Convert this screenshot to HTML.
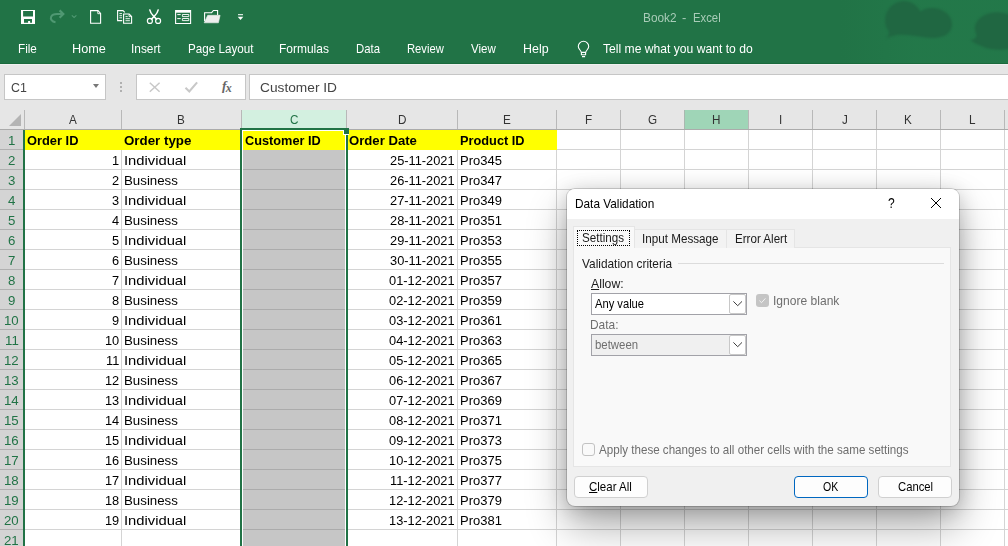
<!DOCTYPE html><html><head><meta charset="utf-8"><title>Book2 - Excel</title><style>*{box-sizing:border-box;margin:0;padding:0}
html,body{width:1008px;height:546px;overflow:hidden;background:#fff;font-family:"Liberation Sans",sans-serif;}
body{position:relative}
#ribbon{position:absolute;left:0;top:0;width:1008px;height:64px;background:#217346;overflow:hidden;border-bottom:1px solid #1a6a3c}
#ribbon .glow{position:absolute;left:840px;top:0;width:168px;height:64px;background:linear-gradient(90deg,rgba(36,124,76,0) 0,rgba(36,124,76,.55) 45%,rgba(36,124,76,.55) 100%)}
.qi{position:absolute}
#fbar{position:absolute;left:0;top:64px;width:1008px;height:46px;background:#e6e6e6;border-top:1px solid #f0f0f0}
#namebox{position:absolute;left:4px;top:9px;width:102px;height:26px;background:#fff;border:1px solid #c6c6c6}
#namebox i{position:absolute;left:87.500px;top:9px;width:0;height:0;border-left:3.500px solid transparent;border-right:3.500px solid transparent;border-top:4px solid #777}
#dots{position:absolute;left:120px;top:17px;width:2px;height:10px;background:repeating-linear-gradient(#b0b0b0 0 2px,transparent 2px 4px)}
#fbtns{position:absolute;left:136px;top:9px;width:110px;height:26px;background:#fff;border:1px solid #c6c6c6}
#finput{position:absolute;left:249px;top:9px;width:770px;height:26px;background:#fff;border:1px solid #c6c6c6}
#grid{position:absolute;left:0;top:110px;width:1008px;height:436px;background:repeating-linear-gradient(#fff 0 19px,#d4d4d4 19px 20px)}
#colhdr{position:absolute;left:0;top:0;width:1008px;height:20px;background:#e6e6e6;border-bottom:1px solid #ababab}
.corner{position:absolute;left:9px;top:4px;width:0;height:0;border-left:12px solid transparent;border-bottom:12px solid #b4b4b4}
.ch{position:absolute;top:0;height:19px;border-left:1px solid #b8b8b8}
.ch.sel{background:#d3f0e0;color:#217346}
.ch.hov{background:#9fd5b7;border-left-color:#a9b8b0}
.rh{position:absolute;left:0;width:23px;height:20px;background:#d4d4d4;border-bottom:1px solid #b0b0b0}
.yellow{position:absolute;left:25px;top:20px;width:532px;height:20px;background:#ffff00}
.grey{position:absolute;left:243px;top:40px;width:102px;height:396px;background:repeating-linear-gradient(#c6c6c6 0 19px,#ababab 19px 20px)}
#vlines i{position:absolute;top:20px;width:1px;height:416px;background:#d4d4d4}
#selbox{position:absolute;left:240px;top:18px;width:108px;height:430px;border:2px solid #217346;border-bottom:none}
#selbox b{position:absolute;left:0;top:0;right:0;bottom:0;border:1px solid #fff;border-bottom:none}
#selhandle{position:absolute;left:344px;top:18px;width:5px;height:6px;background:#217346}
#selhandle:before{content:"";position:absolute;left:-1px;top:2px;width:1px;height:5px;background:#fff}
#selhandle:after{content:"";position:absolute;left:-1px;top:6px;width:6px;height:1px;background:#fff}
#aline{position:absolute;left:23px;top:20px;width:2px;height:416px;background:#217346}
#dlg{position:absolute;left:567px;top:189px;width:392px;height:317px;background:#f0f0f0;border-radius:8px;box-shadow:0 0 0 1px rgba(0,0,0,.16),0 20px 40px rgba(0,0,0,.33),0 3px 20px rgba(0,0,0,.18);font-size:12px;overflow:visible}
#dlg:before{content:"";position:absolute;left:0;top:0;width:392px;height:30px;background:#fff;border-radius:8px 8px 0 0}
.dx{position:absolute;left:363px;top:8px}
.panel{position:absolute;left:6px;top:58px;width:378px;height:220px;background:#f9f9f9;border:1px solid #e5e5e5}
.tb{position:absolute;top:39.500px;height:19.500px;border:1px solid #e5e5e5;border-bottom:none;font-size:12px;line-height:15px;padding-top:2px;text-align:center;color:#1a1a1a;white-space:pre;background:#f3f3f3}
.tb.t1{left:6px;top:37px;width:62px;height:22px;background:#f9f9f9;padding-top:0}
.tb.t1 span{position:absolute;left:3px;top:3px;width:53px;height:16px;border:1px dotted #000;line-height:14px}
.tb.t2{left:67px;width:93px}
.tb.t3{left:159px;width:69px}
.gl{position:absolute;left:111px;top:74px;width:266px;height:1px;background:#dcdcdc}
.combo{position:absolute;left:24px;width:156px;height:22px;border:1px solid #a2a2a8}
.combo b{position:absolute;right:0;top:0;width:17px;height:20px;background:#fff;border:1px solid #c8c8c8;border-radius:2px}
.combo b svg{position:absolute;left:2.500px;top:6.300px}
.cb{position:absolute;width:13px;height:13px;border-radius:3px}
.cb.on{left:189px;top:105px;background:#c5c5c5}
.cb.on svg{position:absolute;left:0;top:0}
.cb.off{left:15px;top:254px;background:#f9f9f9;border:1px solid #c2c2c2}
.btn{position:absolute;top:287px;width:74px;height:22px;background:#fdfdfd;border:1px solid #d0d0d0;border-radius:4px;text-align:center;line-height:15px;padding-top:3px;color:#000;font-size:12px}
.btn.ok{border:1.5px solid #0067c0;padding-top:2.5px}
.t{position:absolute;white-space:pre;transform-origin:0 50%;display:block}
#gtext,#dtext{position:absolute;left:0;top:0;width:0;height:0}
</style></head><body>
<div id="ribbon">
<div class="glow"></div>
<svg class="qi" style="left:848px;top:0" width="160" height="64" viewBox="848 0 160 64"><g fill="#206742" style="filter:blur(.8px)"><path d="M886 38.500Q890 35 888.500 31C880 19 888 2 903 1c8-.3 14 4 17.500 10.500 5-4 14-4.500 21-1.500 11 4.500 14 17 6 24-5 4-14 4.500-22 3.500-10-1.500-20-3.500-29-2.500q-6 1-11 3.500z"/><path d="M970.500 40.500q6-1.500 6-6c-5-9 2-19 14-21.500 7-1.500 14-.5 20 2.500v33c-8 2-20 1.500-28-2-4-1.500-8-3.500-12-6z"/></g></svg>
<svg class="qi" style="left:0;top:0" width="260" height="34" viewBox="0 0 260 34" fill="none" stroke="#fff" stroke-width="1.1">
<!-- save -->
<path d="M21 10h14v14h-14z M23.100 11h9.900v5.400h-9.900z M24 19h8v3.800h-1.900v-1.700h-2v1.700h-4.100z" fill="#fff" fill-rule="evenodd" stroke="none"/>
<!-- redo -->
<path d="M55.500 22.200c-3.800-.6-5.300-3.200-4.300-5.500 1-2.200 3.500-2.800 6.300-2.700h5" stroke="#4f9872" stroke-width="2"/><path d="M59.600 10.400l3.700 3.600-3.700 3.700" stroke="#4f9872" stroke-width="2.200"/>
<path d="M71.800 15.300l2.300 2.200 2.300-2.200" stroke="#4f9872" stroke-width="1.100"/>
<!-- new -->
<path d="M90.600 10.600h7.400l2.600 2.800v9.900h-10z"/><path d="M97.800 10.800v2.900h2.700" stroke-width=".9"/>
<!-- copy -->
<path d="M122.200 20.600h-4.600v-10h5.400l1.800 1.800"/><path d="M119.400 13.600h2.600M119.400 15.700h2.600M119.400 17.800h2.600" stroke-width=".9"/>
<path d="M123.600 14h5.600l2.400 2.500v6.800h-8z"/><path d="M125.500 16.600h2.200M125.500 18.700h4.400M125.500 20.700h4.400" stroke-width=".9"/><path d="M129 14.200v2.400h2.400" stroke-width=".8"/>
<!-- scissors -->
<path d="M149.600 9.300c.6 3 2.400 5.400 4.400 7.300l3 3M158.400 9.300c-.6 3-2.400 5.400-4.400 7.300l-3 3" stroke-width="1.500"/><circle cx="149.900" cy="20.900" r="2.500" stroke-width="1.200"/><circle cx="158.100" cy="20.900" r="2.500" stroke-width="1.200"/>
<!-- form -->
<path d="M175.600 10.600h15v12.900h-15z"/><path d="M175.600 11.600h15" stroke-width="2.200"/><path d="M177.300 14.600h3.400M177.300 18.600h3.400" stroke-width="1"/><path d="M182.400 14.500h6.400v2.100h-6.400zM182.400 18.500h6.400v2.100h-6.400z" stroke-width=".9"/>
<!-- folder -->
<path d="M204.600 21v-8.300h7l1.800-2.200h4.200v4.500"/><path d="M204.200 22.800l3.500-7.500h12.400l-1.700 7.500z" fill="#eee" stroke="#eee" stroke-width=".6"/>
<!-- dropdown -->
<path d="M238 14.700h5" stroke-width="1"/><path d="M237.700 16.700h5.600l-2.800 3.200z" fill="#fff" stroke="none"/>
</svg>
<svg class="qi" style="left:576px;top:40px" width="16" height="18" viewBox="576 40 16 18" fill="none" stroke="#fff" stroke-width="1.1"><path d="M581.300 52.400c-.6-2.400-3-3.400-3-5.900a5.200 5.200 0 0 1 10.400 0c0 2.500-2.400 3.500-3 5.900zM581.400 52.400v2.400h4.200v-2.400M582 56.600h3.100"/></svg>
<span class="t" style="left:642.65px;top:9.67px;font-size:12.5px;line-height:16px;color:#a9ccb8;transform:scaleX(0.9453);">Book2</span>
<span class="t" style="left:682.23px;top:9.67px;font-size:12.5px;line-height:16px;color:#a9ccb8;transform:scaleX(1.0323);">-</span>
<span class="t" style="left:692.70px;top:9.67px;font-size:12.5px;line-height:16px;color:#a9ccb8;transform:scaleX(0.9043);">Excel</span>
<span class="t" style="left:18.44px;top:40.67px;font-size:12.2px;line-height:16px;color:#fff;transform:scaleX(0.9613);">File</span>
<span class="t" style="left:71.66px;top:40.67px;font-size:12.2px;line-height:16px;color:#fff;transform:scaleX(1.0419);">Home</span>
<span class="t" style="left:131.23px;top:40.67px;font-size:12.2px;line-height:16px;color:#fff;transform:scaleX(0.9727);">Insert</span>
<span class="t" style="left:187.64px;top:40.67px;font-size:12.2px;line-height:16px;color:#fff;transform:scaleX(0.9555);">Page Layout</span>
<span class="t" style="left:279.42px;top:40.67px;font-size:12.2px;line-height:16px;color:#fff;transform:scaleX(0.9828);">Formulas</span>
<span class="t" style="left:355.87px;top:40.67px;font-size:12.2px;line-height:16px;color:#fff;transform:scaleX(0.9315);">Data</span>
<span class="t" style="left:406.68px;top:40.67px;font-size:12.2px;line-height:16px;color:#fff;transform:scaleX(0.9219);">Review</span>
<span class="t" style="left:470.85px;top:40.67px;font-size:12.2px;line-height:16px;color:#fff;transform:scaleX(0.9466);">View</span>
<span class="t" style="left:522.58px;top:40.67px;font-size:12.2px;line-height:16px;color:#fff;transform:scaleX(1.0212);">Help</span>
<span class="t" style="left:603.25px;top:40.67px;font-size:12.2px;line-height:16px;color:#fff;transform:scaleX(0.9953);">Tell me what you want to do</span>
</div>
<div id="fbar">
<div id="namebox"><i></i></div>
<div id="dots"></div>
<div id="fbtns">
<svg width="108" height="24" viewBox="137 75 108 24" fill="none" stroke="#c8c8c8" stroke-width="1.500"><path d="M149.800 82.700l9.800 9M159.600 82.700l-9.800 9"/><path d="M185.500 87.800l3.800 3.600 7.800-9" stroke-width="2.100"/></svg>
<span style="position:absolute;left:85px;top:1px;font-family:'Liberation Serif',serif;font-style:italic;font-size:13.500px;line-height:20px;color:#666;font-weight:bold;letter-spacing:-.8px;white-space:pre">f<span style="font-size:12px;position:relative;top:1.500px">x</span></span>
</div>
<div id="finput"></div>
</div>
<span class="t" style="left:10.78px;top:79.00px;font-size:13px;line-height:17px;color:#444;transform:scaleX(0.9511);">C1</span>
<span class="t" style="left:260.45px;top:80.03px;font-size:12.6px;line-height:16px;color:#444;transform:scaleX(1.0892);">Customer ID</span>

<div id="grid">
<div id="colhdr">
<div class="corner"></div>
<div class="ch" style="left:24px;width:97px"></div>
<div class="ch" style="left:121px;width:120px"></div>
<div class="ch sel" style="left:241px;width:105px"></div>
<div class="ch" style="left:346px;width:111px"></div>
<div class="ch" style="left:457px;width:99px"></div>
<div class="ch" style="left:556px;width:64px"></div>
<div class="ch" style="left:620px;width:64px"></div>
<div class="ch hov" style="left:684px;width:64px"></div>
<div class="ch" style="left:748px;width:64px"></div>
<div class="ch" style="left:812px;width:64px"></div>
<div class="ch" style="left:876px;width:64px"></div>
<div class="ch" style="left:940px;width:64px"></div>
<div class="ch" style="left:1004px;width:4px"></div>
</div>
<div class="rh" style="top:20px"></div>
<div class="rh" style="top:40px"></div>
<div class="rh" style="top:60px"></div>
<div class="rh" style="top:80px"></div>
<div class="rh" style="top:100px"></div>
<div class="rh" style="top:120px"></div>
<div class="rh" style="top:140px"></div>
<div class="rh" style="top:160px"></div>
<div class="rh" style="top:180px"></div>
<div class="rh" style="top:200px"></div>
<div class="rh" style="top:220px"></div>
<div class="rh" style="top:240px"></div>
<div class="rh" style="top:260px"></div>
<div class="rh" style="top:280px"></div>
<div class="rh" style="top:300px"></div>
<div class="rh" style="top:320px"></div>
<div class="rh" style="top:340px"></div>
<div class="rh" style="top:360px"></div>
<div class="rh" style="top:380px"></div>
<div class="rh" style="top:400px"></div>
<div class="rh" style="top:420px"></div>
<div id="vlines">
<i style="left:121px"></i>
<i style="left:241px"></i>
<i style="left:346px"></i>
<i style="left:457px"></i>
<i style="left:556px"></i>
<i style="left:620px"></i>
<i style="left:684px"></i>
<i style="left:748px"></i>
<i style="left:812px"></i>
<i style="left:876px"></i>
<i style="left:940px"></i>
<i style="left:1004px"></i>
</div>
<div class="yellow"></div><div class="grey"></div>
<div id="selbox"><b></b></div><div id="selhandle"></div><div id="aline"></div>
</div>
<div id="gtext"><span class="t" style="left:69.11px;top:111.00px;font-size:13px;line-height:17px;color:#333;transform:scaleX(0.9000);">A</span>
<span class="t" style="left:177.43px;top:111.00px;font-size:13px;line-height:17px;color:#333;transform:scaleX(0.9000);">B</span>
<span class="t" style="left:289.70px;top:111.00px;font-size:13px;line-height:17px;color:#217346;transform:scaleX(0.9000);">C</span>
<span class="t" style="left:397.57px;top:111.00px;font-size:13px;line-height:17px;color:#333;transform:scaleX(0.9000);">D</span>
<span class="t" style="left:502.86px;top:111.00px;font-size:13px;line-height:17px;color:#333;transform:scaleX(0.9000);">E</span>
<span class="t" style="left:584.67px;top:111.00px;font-size:13px;line-height:17px;color:#333;transform:scaleX(0.9000);">F</span>
<span class="t" style="left:648.09px;top:111.00px;font-size:13px;line-height:17px;color:#333;transform:scaleX(0.9000);">G</span>
<span class="t" style="left:712.27px;top:111.00px;font-size:13px;line-height:17px;color:#333;transform:scaleX(0.9000);">H</span>
<span class="t" style="left:778.86px;top:111.00px;font-size:13px;line-height:17px;color:#333;transform:scaleX(0.9000);">I</span>
<span class="t" style="left:841.91px;top:111.00px;font-size:13px;line-height:17px;color:#333;transform:scaleX(0.9000);">J</span>
<span class="t" style="left:904.18px;top:111.00px;font-size:13px;line-height:17px;color:#333;transform:scaleX(0.9000);">K</span>
<span class="t" style="left:968.97px;top:111.00px;font-size:13px;line-height:17px;color:#333;transform:scaleX(0.9000);">L</span>
<span class="t" style="left:7.75px;top:132.00px;font-size:13px;line-height:17px;color:#217346;transform:scaleX(1.0200);">1</span>
<span class="t" style="left:7.90px;top:152.00px;font-size:13px;line-height:17px;color:#217346;transform:scaleX(1.0200);">2</span>
<span class="t" style="left:7.95px;top:172.00px;font-size:13px;line-height:17px;color:#217346;transform:scaleX(1.0200);">3</span>
<span class="t" style="left:7.98px;top:192.00px;font-size:13px;line-height:17px;color:#217346;transform:scaleX(1.0200);">4</span>
<span class="t" style="left:7.93px;top:212.00px;font-size:13px;line-height:17px;color:#217346;transform:scaleX(1.0200);">5</span>
<span class="t" style="left:7.85px;top:232.00px;font-size:13px;line-height:17px;color:#217346;transform:scaleX(1.0200);">6</span>
<span class="t" style="left:7.90px;top:252.00px;font-size:13px;line-height:17px;color:#217346;transform:scaleX(1.0200);">7</span>
<span class="t" style="left:7.90px;top:272.00px;font-size:13px;line-height:17px;color:#217346;transform:scaleX(1.0200);">8</span>
<span class="t" style="left:7.90px;top:292.00px;font-size:13px;line-height:17px;color:#217346;transform:scaleX(1.0200);">9</span>
<span class="t" style="left:3.98px;top:312.00px;font-size:13px;line-height:17px;color:#217346;transform:scaleX(1.0200);">10</span>
<span class="t" style="left:4.56px;top:332.00px;font-size:13px;line-height:17px;color:#217346;transform:scaleX(1.0200);">11</span>
<span class="t" style="left:4.05px;top:352.00px;font-size:13px;line-height:17px;color:#217346;transform:scaleX(1.0200);">12</span>
<span class="t" style="left:4.00px;top:372.00px;font-size:13px;line-height:17px;color:#217346;transform:scaleX(1.0200);">13</span>
<span class="t" style="left:3.92px;top:392.00px;font-size:13px;line-height:17px;color:#217346;transform:scaleX(1.0200);">14</span>
<span class="t" style="left:4.00px;top:412.00px;font-size:13px;line-height:17px;color:#217346;transform:scaleX(1.0200);">15</span>
<span class="t" style="left:4.00px;top:432.00px;font-size:13px;line-height:17px;color:#217346;transform:scaleX(1.0200);">16</span>
<span class="t" style="left:4.05px;top:452.00px;font-size:13px;line-height:17px;color:#217346;transform:scaleX(1.0200);">17</span>
<span class="t" style="left:4.00px;top:472.00px;font-size:13px;line-height:17px;color:#217346;transform:scaleX(1.0200);">18</span>
<span class="t" style="left:4.03px;top:492.00px;font-size:13px;line-height:17px;color:#217346;transform:scaleX(1.0200);">19</span>
<span class="t" style="left:4.13px;top:512.00px;font-size:13px;line-height:17px;color:#217346;transform:scaleX(1.0200);">20</span>
<span class="t" style="left:4.21px;top:532.00px;font-size:13px;line-height:17px;color:#217346;transform:scaleX(1.0200);">21</span>
<span class="t" style="left:27.11px;top:132.03px;font-size:13.2px;line-height:17px;color:#000;font-weight:bold;transform:scaleX(0.9749);">Order ID</span>
<span class="t" style="left:123.99px;top:132.03px;font-size:13.2px;line-height:17px;color:#000;font-weight:bold;transform:scaleX(1.0106);">Order type</span>
<span class="t" style="left:244.72px;top:132.03px;font-size:13.2px;line-height:17px;color:#000;font-weight:bold;transform:scaleX(0.9658);">Customer ID</span>
<span class="t" style="left:348.90px;top:132.03px;font-size:13.2px;line-height:17px;color:#000;font-weight:bold;transform:scaleX(0.9955);">Order Date</span>
<span class="t" style="left:459.68px;top:132.03px;font-size:13.2px;line-height:17px;color:#000;font-weight:bold;transform:scaleX(0.9686);">Product ID</span>
<span class="t" style="left:112.10px;top:151.93px;font-size:13.2px;line-height:17px;color:#000;transform:scaleX(0.9700);">1</span>
<span class="t" style="left:123.86px;top:151.93px;font-size:13.2px;line-height:17px;color:#000;transform:scaleX(1.1192);">Individual</span>
<span class="t" style="left:390.05px;top:151.93px;font-size:13.2px;line-height:17px;color:#000;transform:scaleX(0.9720);">25-11-2021</span>
<span class="t" style="left:460.17px;top:151.93px;font-size:13.2px;line-height:17px;color:#000;transform:scaleX(0.9850);">Pro345</span>
<span class="t" style="left:112.10px;top:171.93px;font-size:13.2px;line-height:17px;color:#000;transform:scaleX(0.9700);">2</span>
<span class="t" style="left:124.14px;top:171.93px;font-size:13.2px;line-height:17px;color:#000;transform:scaleX(1.0067);">Business</span>
<span class="t" style="left:390.05px;top:171.93px;font-size:13.2px;line-height:17px;color:#000;transform:scaleX(0.9720);">26-11-2021</span>
<span class="t" style="left:460.17px;top:171.93px;font-size:13.2px;line-height:17px;color:#000;transform:scaleX(0.9850);">Pro347</span>
<span class="t" style="left:112.00px;top:191.93px;font-size:13.2px;line-height:17px;color:#000;transform:scaleX(0.9700);">3</span>
<span class="t" style="left:123.86px;top:191.93px;font-size:13.2px;line-height:17px;color:#000;transform:scaleX(1.1192);">Individual</span>
<span class="t" style="left:390.05px;top:191.93px;font-size:13.2px;line-height:17px;color:#000;transform:scaleX(0.9720);">27-11-2021</span>
<span class="t" style="left:460.17px;top:191.93px;font-size:13.2px;line-height:17px;color:#000;transform:scaleX(0.9850);">Pro349</span>
<span class="t" style="left:111.81px;top:211.93px;font-size:13.2px;line-height:17px;color:#000;transform:scaleX(0.9700);">4</span>
<span class="t" style="left:124.14px;top:211.93px;font-size:13.2px;line-height:17px;color:#000;transform:scaleX(1.0067);">Business</span>
<span class="t" style="left:390.05px;top:211.93px;font-size:13.2px;line-height:17px;color:#000;transform:scaleX(0.9720);">28-11-2021</span>
<span class="t" style="left:460.17px;top:211.93px;font-size:13.2px;line-height:17px;color:#000;transform:scaleX(0.9850);">Pro351</span>
<span class="t" style="left:112.00px;top:231.93px;font-size:13.2px;line-height:17px;color:#000;transform:scaleX(0.9700);">5</span>
<span class="t" style="left:123.86px;top:231.93px;font-size:13.2px;line-height:17px;color:#000;transform:scaleX(1.1192);">Individual</span>
<span class="t" style="left:390.05px;top:231.93px;font-size:13.2px;line-height:17px;color:#000;transform:scaleX(0.9720);">29-11-2021</span>
<span class="t" style="left:460.17px;top:231.93px;font-size:13.2px;line-height:17px;color:#000;transform:scaleX(0.9850);">Pro353</span>
<span class="t" style="left:112.00px;top:251.93px;font-size:13.2px;line-height:17px;color:#000;transform:scaleX(0.9700);">6</span>
<span class="t" style="left:124.14px;top:251.93px;font-size:13.2px;line-height:17px;color:#000;transform:scaleX(1.0067);">Business</span>
<span class="t" style="left:390.05px;top:251.93px;font-size:13.2px;line-height:17px;color:#000;transform:scaleX(0.9720);">30-11-2021</span>
<span class="t" style="left:460.17px;top:251.93px;font-size:13.2px;line-height:17px;color:#000;transform:scaleX(0.9850);">Pro355</span>
<span class="t" style="left:112.10px;top:271.93px;font-size:13.2px;line-height:17px;color:#000;transform:scaleX(0.9700);">7</span>
<span class="t" style="left:123.86px;top:271.93px;font-size:13.2px;line-height:17px;color:#000;transform:scaleX(1.1192);">Individual</span>
<span class="t" style="left:389.07px;top:271.93px;font-size:13.2px;line-height:17px;color:#000;transform:scaleX(0.9720);">01-12-2021</span>
<span class="t" style="left:460.17px;top:271.93px;font-size:13.2px;line-height:17px;color:#000;transform:scaleX(0.9850);">Pro357</span>
<span class="t" style="left:112.00px;top:291.93px;font-size:13.2px;line-height:17px;color:#000;transform:scaleX(0.9700);">8</span>
<span class="t" style="left:124.14px;top:291.93px;font-size:13.2px;line-height:17px;color:#000;transform:scaleX(1.0067);">Business</span>
<span class="t" style="left:389.07px;top:291.93px;font-size:13.2px;line-height:17px;color:#000;transform:scaleX(0.9720);">02-12-2021</span>
<span class="t" style="left:460.17px;top:291.93px;font-size:13.2px;line-height:17px;color:#000;transform:scaleX(0.9850);">Pro359</span>
<span class="t" style="left:112.05px;top:311.93px;font-size:13.2px;line-height:17px;color:#000;transform:scaleX(0.9700);">9</span>
<span class="t" style="left:123.86px;top:311.93px;font-size:13.2px;line-height:17px;color:#000;transform:scaleX(1.1192);">Individual</span>
<span class="t" style="left:389.07px;top:311.93px;font-size:13.2px;line-height:17px;color:#000;transform:scaleX(0.9720);">03-12-2021</span>
<span class="t" style="left:460.17px;top:311.93px;font-size:13.2px;line-height:17px;color:#000;transform:scaleX(0.9850);">Pro361</span>
<span class="t" style="left:104.83px;top:331.93px;font-size:13.2px;line-height:17px;color:#000;transform:scaleX(0.9700);">10</span>
<span class="t" style="left:124.14px;top:331.93px;font-size:13.2px;line-height:17px;color:#000;transform:scaleX(1.0067);">Business</span>
<span class="t" style="left:389.07px;top:331.93px;font-size:13.2px;line-height:17px;color:#000;transform:scaleX(0.9720);">04-12-2021</span>
<span class="t" style="left:460.17px;top:331.93px;font-size:13.2px;line-height:17px;color:#000;transform:scaleX(0.9850);">Pro363</span>
<span class="t" style="left:105.94px;top:351.93px;font-size:13.2px;line-height:17px;color:#000;transform:scaleX(0.9700);">11</span>
<span class="t" style="left:123.86px;top:351.93px;font-size:13.2px;line-height:17px;color:#000;transform:scaleX(1.1192);">Individual</span>
<span class="t" style="left:389.07px;top:351.93px;font-size:13.2px;line-height:17px;color:#000;transform:scaleX(0.9720);">05-12-2021</span>
<span class="t" style="left:460.17px;top:351.93px;font-size:13.2px;line-height:17px;color:#000;transform:scaleX(0.9850);">Pro365</span>
<span class="t" style="left:104.97px;top:371.93px;font-size:13.2px;line-height:17px;color:#000;transform:scaleX(0.9700);">12</span>
<span class="t" style="left:124.14px;top:371.93px;font-size:13.2px;line-height:17px;color:#000;transform:scaleX(1.0067);">Business</span>
<span class="t" style="left:389.07px;top:371.93px;font-size:13.2px;line-height:17px;color:#000;transform:scaleX(0.9720);">06-12-2021</span>
<span class="t" style="left:460.17px;top:371.93px;font-size:13.2px;line-height:17px;color:#000;transform:scaleX(0.9850);">Pro367</span>
<span class="t" style="left:104.87px;top:391.93px;font-size:13.2px;line-height:17px;color:#000;transform:scaleX(0.9700);">13</span>
<span class="t" style="left:123.86px;top:391.93px;font-size:13.2px;line-height:17px;color:#000;transform:scaleX(1.1192);">Individual</span>
<span class="t" style="left:389.07px;top:391.93px;font-size:13.2px;line-height:17px;color:#000;transform:scaleX(0.9720);">07-12-2021</span>
<span class="t" style="left:460.17px;top:391.93px;font-size:13.2px;line-height:17px;color:#000;transform:scaleX(0.9850);">Pro369</span>
<span class="t" style="left:104.68px;top:411.93px;font-size:13.2px;line-height:17px;color:#000;transform:scaleX(0.9700);">14</span>
<span class="t" style="left:124.14px;top:411.93px;font-size:13.2px;line-height:17px;color:#000;transform:scaleX(1.0067);">Business</span>
<span class="t" style="left:389.07px;top:411.93px;font-size:13.2px;line-height:17px;color:#000;transform:scaleX(0.9720);">08-12-2021</span>
<span class="t" style="left:460.17px;top:411.93px;font-size:13.2px;line-height:17px;color:#000;transform:scaleX(0.9850);">Pro371</span>
<span class="t" style="left:104.87px;top:431.93px;font-size:13.2px;line-height:17px;color:#000;transform:scaleX(0.9700);">15</span>
<span class="t" style="left:123.86px;top:431.93px;font-size:13.2px;line-height:17px;color:#000;transform:scaleX(1.1192);">Individual</span>
<span class="t" style="left:389.07px;top:431.93px;font-size:13.2px;line-height:17px;color:#000;transform:scaleX(0.9720);">09-12-2021</span>
<span class="t" style="left:460.17px;top:431.93px;font-size:13.2px;line-height:17px;color:#000;transform:scaleX(0.9850);">Pro373</span>
<span class="t" style="left:104.87px;top:451.93px;font-size:13.2px;line-height:17px;color:#000;transform:scaleX(0.9700);">16</span>
<span class="t" style="left:124.14px;top:451.93px;font-size:13.2px;line-height:17px;color:#000;transform:scaleX(1.0067);">Business</span>
<span class="t" style="left:389.07px;top:451.93px;font-size:13.2px;line-height:17px;color:#000;transform:scaleX(0.9720);">10-12-2021</span>
<span class="t" style="left:460.17px;top:451.93px;font-size:13.2px;line-height:17px;color:#000;transform:scaleX(0.9850);">Pro375</span>
<span class="t" style="left:104.97px;top:471.93px;font-size:13.2px;line-height:17px;color:#000;transform:scaleX(0.9700);">17</span>
<span class="t" style="left:123.86px;top:471.93px;font-size:13.2px;line-height:17px;color:#000;transform:scaleX(1.1192);">Individual</span>
<span class="t" style="left:390.05px;top:471.93px;font-size:13.2px;line-height:17px;color:#000;transform:scaleX(0.9720);">11-12-2021</span>
<span class="t" style="left:460.17px;top:471.93px;font-size:13.2px;line-height:17px;color:#000;transform:scaleX(0.9850);">Pro377</span>
<span class="t" style="left:104.87px;top:491.93px;font-size:13.2px;line-height:17px;color:#000;transform:scaleX(0.9700);">18</span>
<span class="t" style="left:124.14px;top:491.93px;font-size:13.2px;line-height:17px;color:#000;transform:scaleX(1.0067);">Business</span>
<span class="t" style="left:389.07px;top:491.93px;font-size:13.2px;line-height:17px;color:#000;transform:scaleX(0.9720);">12-12-2021</span>
<span class="t" style="left:460.17px;top:491.93px;font-size:13.2px;line-height:17px;color:#000;transform:scaleX(0.9850);">Pro379</span>
<span class="t" style="left:104.92px;top:511.93px;font-size:13.2px;line-height:17px;color:#000;transform:scaleX(0.9700);">19</span>
<span class="t" style="left:123.86px;top:511.93px;font-size:13.2px;line-height:17px;color:#000;transform:scaleX(1.1192);">Individual</span>
<span class="t" style="left:389.07px;top:511.93px;font-size:13.2px;line-height:17px;color:#000;transform:scaleX(0.9720);">13-12-2021</span>
<span class="t" style="left:460.17px;top:511.93px;font-size:13.2px;line-height:17px;color:#000;transform:scaleX(0.9850);">Pro381</span></div>
<div id="dlg">
<svg class="dx" width="12" height="12" viewBox="0 0 12 12" stroke="#000" stroke-width="1" fill="none"><path d="M1 1l10 10M11 1L1 11"/></svg>
<div class="dbody"></div>
<div class="panel"></div>
<div class="tb t1"><span></span></div>
<div class="tb t2"></div>
<div class="tb t3"></div>
<div class="gl"></div>
<div class="combo" style="top:104px;background:#fff"><b><svg width="10" height="6" viewBox="0 0 10 6" fill="none" stroke="#3c3c3c" stroke-width="1"><path d="M.4.400l4.300 4.300 4.300-4.300"/></svg></b></div>
<div class="cb on"><svg width="13" height="13" viewBox="0 0 13 13" fill="none" stroke="#f2f2f2" stroke-width="1"><path d="M3.400 6.600l2.100 2.100 3.900-4.300"/></svg></div>
<div class="combo" style="top:145px;background:#f0f0f0"><b><svg width="10" height="6" viewBox="0 0 10 6" fill="none" stroke="#3c3c3c" stroke-width="1"><path d="M.4.400l4.300 4.300 4.300-4.300"/></svg></b></div>
<div class="cb off"></div>
<div class="btn" style="left:6.500px"></div>
<div class="btn ok" style="left:227px"></div>
<div class="btn" style="left:311px"></div>
</div>

<div id="dtext"><span class="t" style="left:575.23px;top:195.67px;font-size:12.2px;line-height:16px;color:#000;transform:scaleX(0.9694);">Data Validation</span>
<span class="t" style="left:887.93px;top:194.15px;font-size:14px;line-height:18px;color:#000;transform:scaleX(0.8593);">?</span>
<span class="t" style="left:581.87px;top:230.47px;font-size:12.2px;line-height:16px;color:#1a1a1a;transform:scaleX(0.9548);">Settings</span>
<span class="t" style="left:641.65px;top:231.37px;font-size:12.2px;line-height:16px;color:#1a1a1a;transform:scaleX(0.9579);">Input Message</span>
<span class="t" style="left:734.55px;top:231.37px;font-size:12.2px;line-height:16px;color:#1a1a1a;transform:scaleX(0.9517);">Error Alert</span>
<span class="t" style="left:582.35px;top:256.17px;font-size:12.2px;line-height:16px;color:#1a1a1a;transform:scaleX(0.9736);">Validation criteria</span>
<span class="t" style="left:591.00px;top:276.17px;font-size:12.2px;line-height:16px;color:#1a1a1a;transform:scaleX(1.0048);"><u>A</u>llow:</span>
<span class="t" style="left:595.30px;top:295.77px;font-size:12.2px;line-height:16px;color:#000;transform:scaleX(0.9161);">Any value</span>
<span class="t" style="left:773.11px;top:293.07px;font-size:12.2px;line-height:16px;color:#6e6e6e;transform:scaleX(0.9894);">Ignore blank</span>
<span class="t" style="left:590.02px;top:317.17px;font-size:12.2px;line-height:16px;color:#6e6e6e;transform:scaleX(0.9797);">Data:</span>
<span class="t" style="left:594.60px;top:336.77px;font-size:12.2px;line-height:16px;color:#6e6e6e;transform:scaleX(0.9350);">between</span>
<span class="t" style="left:599.30px;top:441.77px;font-size:12.2px;line-height:16px;color:#6e6e6e;transform:scaleX(0.9520);">Apply these changes to all other cells with the same settings</span>
<span class="t" style="left:588.93px;top:478.77px;font-size:12.2px;line-height:16px;color:#000;transform:scaleX(0.9432);"><u>C</u>lear All</span>
<span class="t" style="left:823.32px;top:478.77px;font-size:12.2px;line-height:16px;color:#000;transform:scaleX(0.8673);">OK</span>
<span class="t" style="left:897.65px;top:478.77px;font-size:12.2px;line-height:16px;color:#000;transform:scaleX(0.9248);">Cancel</span></div>
</body></html>
